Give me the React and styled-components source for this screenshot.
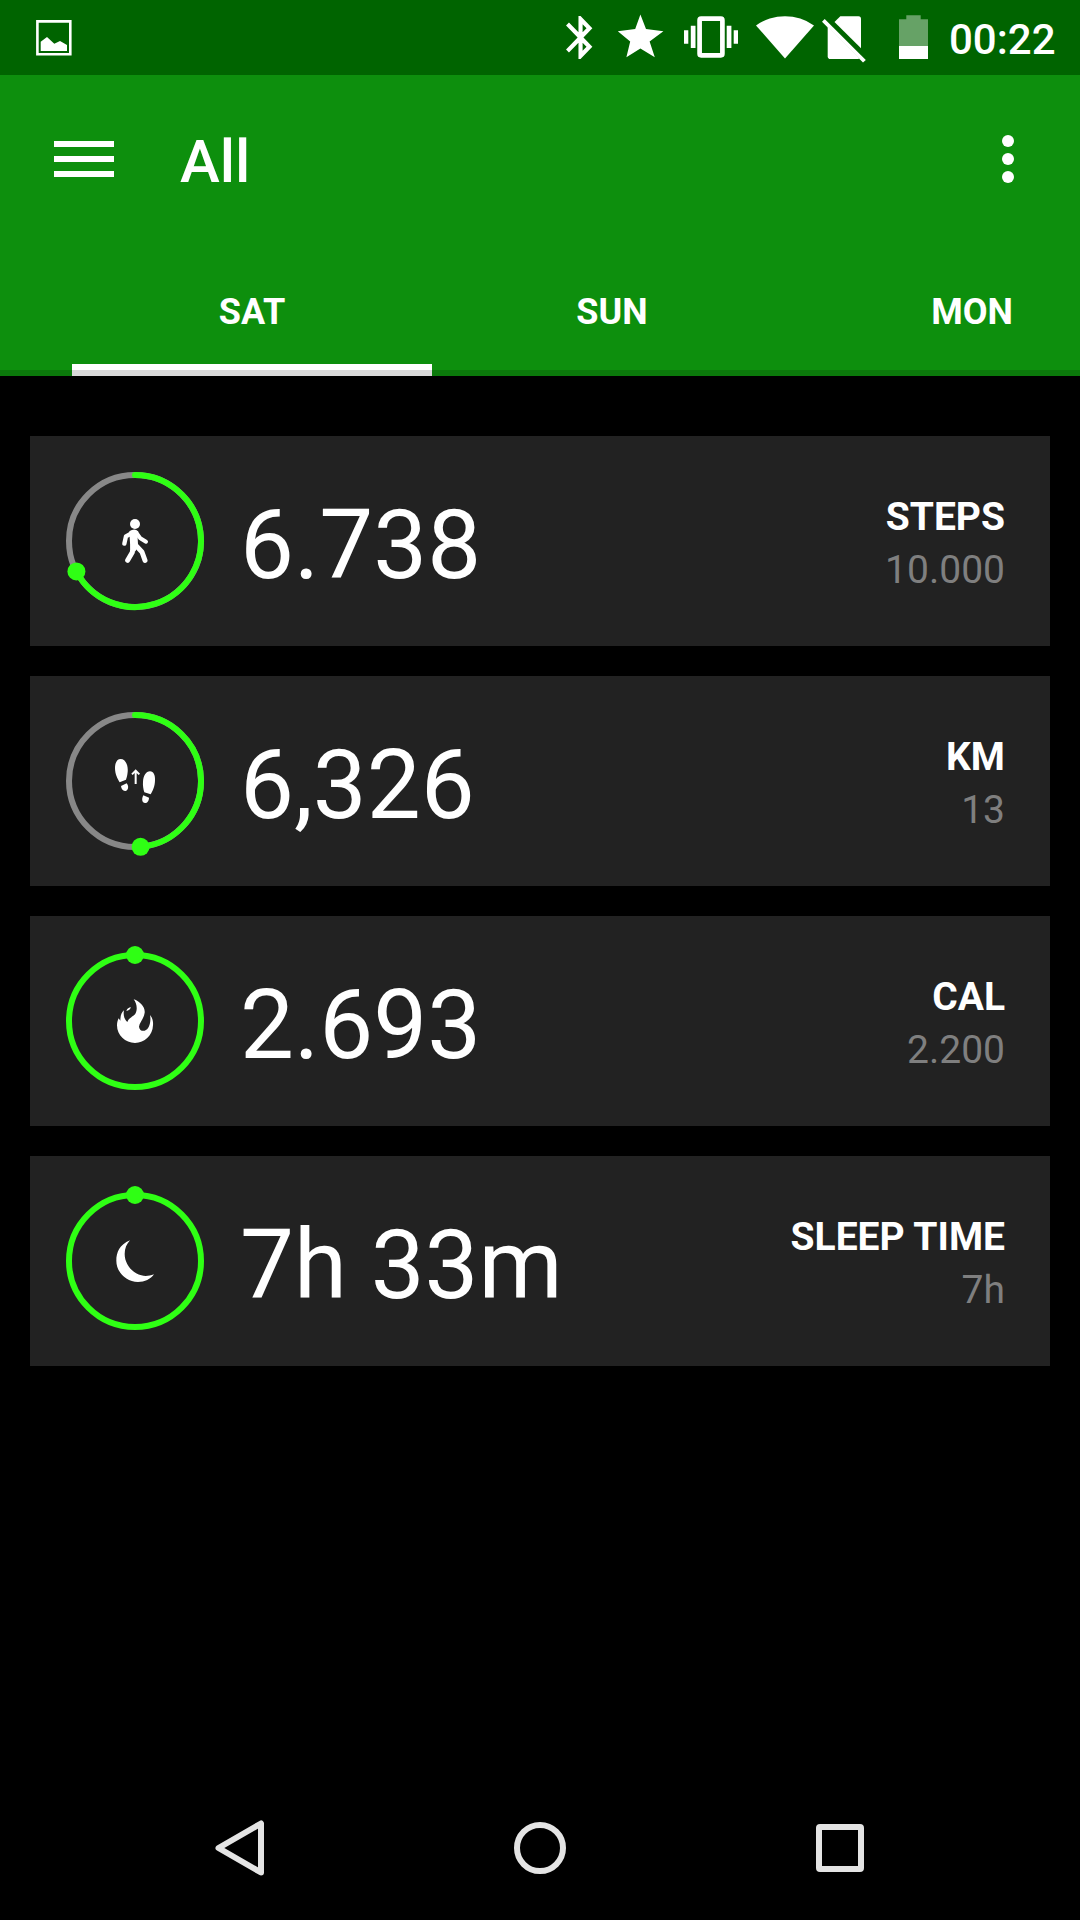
import React from 'react';
import styled, { createGlobalStyle } from 'styled-components';

const GlobalStyle = createGlobalStyle`
  * {
    box-sizing: border-box;
  }

  body {
    margin: 0;
    background: #000;
    font-family: Roboto, sans-serif;
    color: #fff;
  }
`;

const Screen = styled.div`
  display: flex;
  flex-direction: column;
  width: 1080px;
  height: 1920px;
  overflow: hidden;
  background: #000;
`;

const StatusBar = styled.div`
  display: flex;
  align-items: flex-start;
  height: 75px;
  padding: 0 25px 0 36px;
  background: #006400;
`;

const StatusIcon = styled.svg`
  display: block;
  flex: none;
  height: 75px;
  margin-left: ${(props) => props.$gap || 0}px;
  fill: #fff;
`;

const Spacer = styled.div`
  flex: 1;
`;

const Clock = styled.div`
  width: 106px;
  margin-left: 21px;
  padding-top: 2px;
  font-size: 42px;
  font-weight: 500;
  line-height: 75px;
  white-space: nowrap;
`;

const Header = styled.header`
  position: relative;
  height: 301px;
  background: #0d8f0d;

  /* shadow strip over the bottom edge and the indicator */
  &::after {
    content: '';
    position: absolute;
    left: 0;
    right: 0;
    bottom: 0;
    height: 6px;
    background: rgba(0, 0, 0, 0.15);
  }
`;

const Toolbar = styled.div`
  display: flex;
  align-items: center;
  height: 168px;
  padding: 0 66px 0 54px;
`;

const MenuButton = styled.button`
  display: flex;
  flex-direction: column;
  gap: 9px;
  width: 60px;
  padding: 0;
  border: none;
  background: none;
`;

const MenuLine = styled.span`
  height: 6px;
  background: #fff;
`;

const Title = styled.h1`
  flex: 1;
  margin: 0 0 0 66px;
  padding-top: 5px;
  font-size: 60px;
  font-weight: 500;
  line-height: 70px;
`;

const MoreButton = styled.button`
  display: flex;
  flex-direction: column;
  gap: 6px;
  padding: 0;
  border: none;
  background: none;
`;

const MoreDot = styled.span`
  width: 12px;
  height: 12px;
  border-radius: 50%;
  background: #fff;
`;

const Tabs = styled.nav`
  display: flex;
  height: 133px;
  padding-left: 72px;
  overflow: hidden;
`;

const Tab = styled.div`
  flex: none;
  width: 360px;
  padding-top: 6px;
  border-bottom: 12px solid ${(props) => (props.$active ? '#fff' : 'transparent')};
  font-size: 36px;
  font-weight: 700;
  line-height: 127px;
  text-align: center;
`;

const CardList = styled.main`
  display: flex;
  flex: 1;
  flex-direction: column;
  gap: 30px;
  padding: 60px 30px 0;
`;

const Card = styled.section`
  display: flex;
  align-items: center;
  height: 210px;
  padding: 0 45px 0 36px;
  background: #222;
`;

const Ring = styled.svg`
  display: block;
  flex: none;
  width: 138px;
  height: 138px;
  overflow: visible;
`;

const Value = styled.div`
  flex: 1;
  padding: 8px 0 0 36px;
  font-size: 96px;
  line-height: 112px;
  white-space: nowrap;
`;

const Goal = styled.div`
  padding-top: 6px;
  font-size: 39px;
  line-height: 53px;
  text-align: right;
`;

const GoalLabel = styled.div`
  font-weight: 700;
`;

const GoalValue = styled.div`
  color: #7f7f7f;
`;

const NavBar = styled.footer`
  display: flex;
  align-items: center;
  justify-content: center;
  gap: 240px;
  height: 144px;
`;

const NavIcon = styled.svg`
  display: block;
  width: 60px;
  height: 60px;
  fill: none;
  stroke: #e4e4e4;
  stroke-width: 6;
  stroke-linejoin: round;
`;

const WalkIcon = () => (
  <g transform="translate(-345 -333)" fill="none" stroke="#fff" strokeLinecap="round" strokeLinejoin="round">
    <circle cx="345" cy="282" r="15" fill="#fff" stroke="none" />
    <path d="M334 310L318 319L313 341" strokeWidth="13" />
    <path d="M351 311L361 325L378 335" strokeWidth="12" />
    <path d="M330 305C338 300 346 299 353 305L351 326L352 344L345 362L333 355Z" fill="#fff" strokeWidth="4" />
    <path d="M339 348L337 367L323 391" strokeWidth="15" />
    <path d="M347 346L366 366L375 391" strokeWidth="15" />
  </g>
);

const DistanceIcon = () => (
  <g transform="translate(-255 -243)" fill="#fff">
    <path d="M212 177C226 177 235 195 233 216C232 228 229 236 228 239L209 247C203 238 195 222 195 205C195 188 201 177 212 177Z" />
    <path d="M213 258L230 250C236 257 236 268 229 272C220 275 214 268 213 258Z" />
    <path d="M300 214C311 214 316 226 315 241C315 258 308 274 302 283L283 277C280 268 278 256 279 245C280 228 288 214 300 214Z" />
    <path d="M280 286L297 293C297 302 292 309 285 309C276 308 274 298 280 286Z" />
    <path d="M257 252V214M246 223L257 212L268 223" fill="none" stroke="#fff" strokeWidth="6" />
  </g>
);

const FlameIcon = () => (
  <g transform="translate(-255 -243)" fill="#fff">
    <path d="M251 178C270 184 286 202 284 218C282 236 268 248 267 260C268 270 276 274 284 272C298 268 304 244 300 225C308 234 310 246 309 256C308 286 284 309 255 309C226 309 201 286 201 256C201 248 203 240 206 235L211 242C211 228 214 217 222 211C219 226 223 238 232 246C235 236 245 231 252 226C264 214 262 192 251 178Z" />
    <path d="M229 213C231 206 237 202 243 202C241 208 236 212 229 213Z" />
  </g>
);

const MoonIcon = () => (
  <g transform="translate(-255 -243)" fill="#fff">
    <path d="M240 181C208 194 199 218 199 242C199 276 228 306 264 306C284 306 302 298 312 283C298 288 285 289 274 286C244 278 224 250 224 222C224 205 230 192 240 181Z" />
  </g>
);

const stats = [
  { label: 'STEPS', value: '6.738', goal: '10.000', progress: 0.6738, Icon: WalkIcon },
  { label: 'KM', value: '6,326', goal: '13', progress: 0.4866, Icon: DistanceIcon },
  { label: 'CAL', value: '2.693', goal: '2.200', progress: 1, Icon: FlameIcon },
  { label: 'SLEEP TIME', value: '7h 33m', goal: '7h', progress: 1, Icon: MoonIcon },
];

const RADIUS = 198;

const ProgressRing = ({ progress, children }) => {
  const angle = progress * 2 * Math.PI;
  const x = RADIUS * Math.sin(angle);
  const y = -RADIUS * Math.cos(angle);
  const full = progress >= 1;

  return (
    <Ring viewBox="-207 -207 414 414">
      <circle r={RADIUS} fill="none" stroke={full ? '#2fff14' : '#888'} strokeWidth="18" />
      {!full && (
        <path
          d={`M0 ${-RADIUS}A${RADIUS} ${RADIUS} 0 ${progress > 0.5 ? 1 : 0} 1 ${x} ${y}`}
          fill="none"
          stroke="#2fff14"
          strokeWidth="18"
          strokeLinecap="round"
        />
      )}
      <circle cx={x} cy={y} r="27" fill="#2fff14" />
      {children}
    </Ring>
  );
};

const StatCard = ({ stat }) => {
  const { label, value, goal, progress, Icon } = stat;

  return (
    <Card>
      <ProgressRing progress={progress}>
        <Icon />
      </ProgressRing>
      <Value>{value}</Value>
      <Goal>
        <GoalLabel>{label}</GoalLabel>
        <GoalValue>{goal}</GoalValue>
      </Goal>
    </Card>
  );
};

const App = () => (
  <>
    <GlobalStyle />
    <Screen>
      <StatusBar>
        <StatusIcon width="36" viewBox="36 0 36 75">
          <path d="M37.4 21.4H70.3V54.3H37.4Z" fill="none" stroke="#fff" strokeWidth="2.6" />
          <path d="M40.7 41.7L47 37L54.3 43.7L60 41L67 45V51H40.7Z" />
        </StatusIcon>
        <Spacer />
        <StatusIcon width="28" viewBox="565 0 28 75">
          <path
            transform="translate(555.7 11.7) scale(2.07 2.15)"
            d="M17.71 7.71L12 2h-1v7.59L6.41 5 5 6.41 10.59 12 5 17.59 6.41 19 11 14.41V22h1l5.71-5.71-4.3-4.29 4.3-4.29zM13 5.83l1.88 1.88L13 9.59V5.83zm1.88 10.46L13 18.17v-3.76l1.88 1.88z"
          />
        </StatusIcon>
        <StatusIcon $gap={24} width="47" viewBox="617 0 47 75">
          <path d="M640.4 14.6L646 29L663.4 31.2L649.6 41.4L654.8 57.2L640.4 48.6L626.4 57.2L630.2 41.4L617.8 31.2L635.2 29Z" />
        </StatusIcon>
        <StatusIcon $gap={20} width="54" viewBox="684 0 54 75">
          <rect x="699.6" y="18.7" width="22.8" height="36.6" rx="1.5" fill="none" stroke="#fff" strokeWidth="4.7" />
          <path d="M684 30.3h4.3v13.5h-4.3zM690.8 25.8h4.7v22.3h-4.7zM726.7 25.8h4.7v22.3h-4.7zM733.7 30.3h4.3v13.5h-4.3z" />
        </StatusIcon>
        <StatusIcon $gap={17} width="60" viewBox="755 0 60 75">
          <path d="M756 25.4A50 50 0 0 1 814 25.4L785 58.5Z" />
        </StatusIcon>
        <StatusIcon $gap={7} width="45" viewBox="822 0 45 75">
          <path d="M840.3 16.2H858.5Q861 16.2 861 18.7V48.3L834.5 22Z" />
          <path d="M827.7 26.7L859.5 58.5L858 59H830.5Q827.7 59 827.7 56.2Z" />
          <path d="M822 21.7L824.7 19L865.8 60L863 62.4Z" />
        </StatusIcon>
        <StatusIcon $gap={32} width="29" viewBox="899 0 29 75">
          <path d="M899 19.3H906.3V15.2H920.7V19.3H928V46H899Z" opacity="0.4" />
          <path d="M899 46H928V59H899Z" />
        </StatusIcon>
        <Clock>00:22</Clock>
      </StatusBar>

      <Header>
        <Toolbar>
          <MenuButton aria-label="Menu">
            <MenuLine />
            <MenuLine />
            <MenuLine />
          </MenuButton>
          <Title>All</Title>
          <MoreButton aria-label="More">
            <MoreDot />
            <MoreDot />
            <MoreDot />
          </MoreButton>
        </Toolbar>
        <Tabs>
          <Tab $active>SAT</Tab>
          <Tab>SUN</Tab>
          <Tab>MON</Tab>
        </Tabs>
      </Header>

      <CardList>
        {stats.map((stat) => (
          <StatCard key={stat.label} stat={stat} />
        ))}
      </CardList>

      <NavBar>
        <NavIcon viewBox="210 1818 60 60">
          <path d="M261 1823.5V1872.5L218.5 1848Z" />
        </NavIcon>
        <NavIcon viewBox="510 1818 60 60">
          <circle cx="540" cy="1848" r="23" />
        </NavIcon>
        <NavIcon viewBox="810 1818 60 60">
          <rect x="819" y="1827" width="42" height="42" rx="1" />
        </NavIcon>
      </NavBar>
    </Screen>
  </>
);

export default App;
